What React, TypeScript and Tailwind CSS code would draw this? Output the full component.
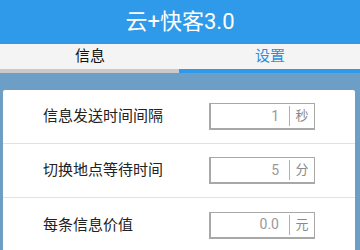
import React from "react";

const rows = [
  { label: "信息发送时间间隔", value: "1", unit: "秒" },
  { label: "切换地点等待时间", value: "5", unit: "分" },
  { label: "每条信息价值", value: "0.0", unit: "元" },
];

export default function App() {
  return (
    <div
      className="w-[360px] h-[250px] overflow-hidden flex flex-col bg-[#6c9ec6]"
      style={{ fontFamily: '"Roboto", "Noto Sans CJK SC", sans-serif' }}
    >
      <div className="h-[44px] shrink-0 bg-[#2e9ae9] flex items-center justify-center">
        <span className="text-white text-[22px] leading-none">云+快客3.0</span>
      </div>
      <div className="h-[25px] shrink-0 bg-[#f4f4f4] flex">
        <div className="flex-1 flex items-center justify-center text-[15px] text-[#111]">信息</div>
        <div className="flex-1 flex items-center justify-center text-[15px] text-[#2e8fd8]">设置</div>
      </div>
      <div className="h-[4px] shrink-0 flex">
        <div className="w-[179px] bg-[#c9c9c9]" />
        <div className="flex-1 bg-[#2e9ae9]" />
      </div>
      <div className="flex-1 pt-[17px] pl-[3px] pr-[5px]">
        <div className="bg-white rounded-[2px] flex flex-col">
          {rows.map((r, i) => (
            <div
              key={i}
              className={`h-[54px] flex items-center justify-between pl-[40px] pr-[40px] ${
                i < rows.length - 1 ? "border-b border-[#e2e2e2]" : ""
              }`}
            >
              <span className="text-[15px] text-[#222]">{r.label}</span>
              <div className="w-[106px] h-[27px] border border-[#a8a8a8] border-l-2 border-b-2 flex items-center">
                <span className="flex-1 text-right pr-[10px] text-[14px] text-[#9a9a9a]">{r.value}</span>
                <div className="w-px h-[20px] bg-[#b0b0b0]" />
                <span className="w-[24px] text-center text-[13px] text-[#8a8a8a]">{r.unit}</span>
              </div>
            </div>
          ))}
        </div>
      </div>
    </div>
  );
}
